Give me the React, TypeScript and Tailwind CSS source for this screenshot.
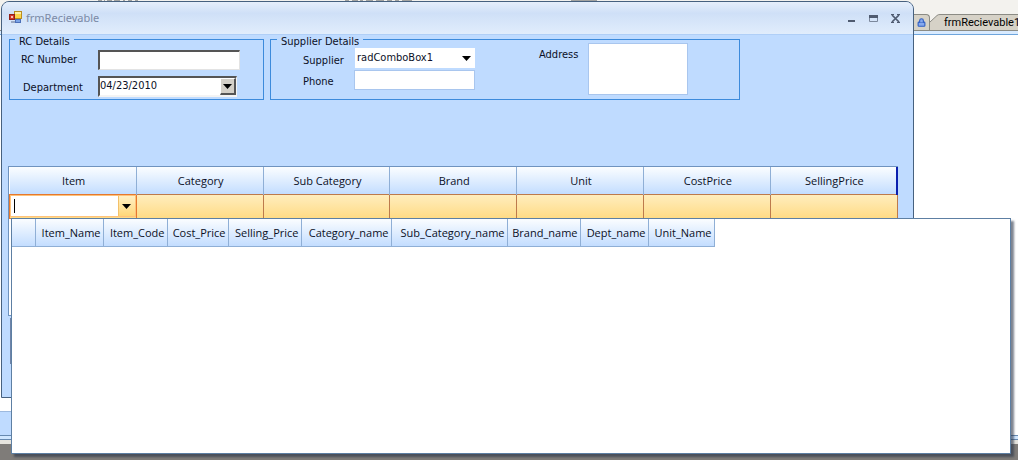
import { Lock } from "lucide-react";

const gridColumns = ["Item", "Category", "Sub Category", "Brand", "Unit", "CostPrice", "SellingPrice"];

const lookupColumns = [
  { name: "Item_Name", width: "w-[68px]" },
  { name: "Item_Code", width: "w-16" },
  { name: "Cost_Price", width: "w-[61px]" },
  { name: "Selling_Price", width: "w-[73px]" },
  { name: "Category_name", width: "w-[90px]" },
  { name: "Sub_Category_name", width: "w-[116px]" },
  { name: "Brand_name", width: "w-[73px]" },
  { name: "Dept_name", width: "w-[68px]" },
  { name: "Unit_Name", width: "w-[66px]" },
];

function DownArrow() {
  return (
    <svg width="9" height="5" viewBox="0 0 9 5" aria-hidden="true">
      <path d="M0 0h9L4.500 5z" fill="#000" />
    </svg>
  );
}

function FormIcon() {
  return (
    <svg width="14" height="14" viewBox="0 0 14 14" aria-hidden="true">
      <rect x="5.500" y="0.500" width="7" height="7" fill="#fbd64b" stroke="#b98d20" />
      <path d="M6 1h6v2H6z" fill="#fff0a6" />
      <rect x="0.500" y="3.500" width="5" height="5" fill="#d4372a" stroke="#932018" />
      <rect x="2" y="5" width="2" height="2" fill="#f6c2b8" />
      <rect x="6.500" y="8.500" width="5" height="3" fill="#7ba3e6" stroke="#4c70b9" />
      <path d="M2 10h4v2H2z" fill="#9aa9c4" />
    </svg>
  );
}

function TitleBar() {
  return (
    <header className="flex h-[33px] items-center border-b border-[#b0cff7] bg-linear-to-b from-[#e6effb] via-[#cfe0f7] via-35% to-[#e1edfc] pr-[7px] pl-[7px]">
      <FormIcon />
      <h1 className="ml-[3px] flex-1 font-['Noto_Sans',sans-serif] text-[11px] text-[#7b8aa6]">frmRecievable</h1>
      <div className="flex">
        <button type="button" aria-label="Minimize" className="flex h-5 w-[22px] items-center justify-center">
          <svg width="9" height="9" viewBox="0 0 9 9">
            <path d="M1 6h7v2H1z" fill="#4f5b70" />
          </svg>
        </button>
        <button type="button" aria-label="Maximize" className="flex h-5 w-[22px] items-center justify-center">
          <svg width="9" height="9" viewBox="0 0 9 9">
            <path d="M.5 1.500h8v6h-8z" fill="none" stroke="#7c889c" />
            <path d="M0 1h9v3H0z" fill="#4f5b70" />
          </svg>
        </button>
        <button type="button" aria-label="Close" className="flex h-5 w-[22px] items-center justify-center">
          <svg width="9" height="9" viewBox="0 0 9 9">
            <path d="M1 1l7 7M8 1L1 8" stroke="#4f5b70" strokeWidth="1.700" />
            <path d="M0 .5h3M6 .5h3M0 8.500h3M6 8.500h3" stroke="#4f5b70" />
          </svg>
        </button>
      </div>
    </header>
  );
}

function RcDetails() {
  return (
    <fieldset className="h-[67px] w-[255px] shrink-0 border border-[#3d8bdc] pl-[11px]">
      <legend className="-ml-1.5 h-[13px] px-1 leading-[17px]">RC Details</legend>
      <div className="mt-1 flex h-5 items-center">
        <label htmlFor="rc" className="w-[77px] leading-4">RC Number</label>
        <input
          id="rc"
          className="h-5 w-[142px] border-t-2 border-r border-b border-l-2 border-t-[#555] border-r-[#e3e3e3] border-b-[#e3e3e3] border-l-[#555] bg-white px-1 outline-none"
        />
      </div>
      <div className="mt-1.5 flex h-[21px] items-center">
        <label htmlFor="dept" className="w-[77px] pt-0.5 pl-0.5 leading-4">Department</label>
        <div className="flex h-[21px] w-[139px] border-t-2 border-r border-b-2 border-l-2 border-t-[#555] border-r-[#f4f4f4] border-b-[#f4f4f4] border-l-[#555] bg-white">
          <input id="dept" defaultValue="04/23/2010" className="w-0 flex-1 outline-none" />
          <button
            type="button"
            aria-label="Open calendar"
            className="flex w-4 items-center justify-center border-t border-r-2 border-b-2 border-l border-t-white border-r-[#555] border-b-[#555] border-l-white bg-[#d4d0c8]"
          >
            <DownArrow />
          </button>
        </div>
      </div>
    </fieldset>
  );
}

function SupplierDetails() {
  return (
    <fieldset className="h-[67px] w-[470px] shrink-0 border border-[#3d8bdc] pl-3">
      <legend className="-ml-1.5 h-[13px] px-1 leading-[17px]">Supplier Details</legend>
      <div className="flex items-start">
        <div className="mt-0.5 flex flex-col gap-0.5 pl-5">
          <div className="flex h-5 items-center">
            <label htmlFor="supplier" className="w-[52px] pt-1.5 leading-4">Supplier</label>
            <div className="grid h-5 w-[120px] items-center bg-white">
              <select id="supplier" className="col-start-1 row-start-1 h-5 w-full appearance-none bg-transparent pl-0.5 outline-none">
                <option>radComboBox1</option>
              </select>
              <span className="pointer-events-none col-start-1 row-start-1 flex justify-end pr-1">
                <DownArrow />
              </span>
            </div>
          </div>
          <div className="flex h-5 items-center">
            <label htmlFor="phone" className="w-[51px] pt-1 leading-4">Phone</label>
            <input id="phone" className="h-5 w-[121px] border border-[#a9c6ee] bg-white px-1 outline-none" />
          </div>
        </div>
        <label htmlFor="address" className="ml-16 w-[49px] pt-px leading-4">Address</label>
        <textarea id="address" className="-mt-[3px] h-[52px] w-[100px] resize-none border border-[#a9c6ee] bg-white px-1 outline-none" />
      </div>
    </fieldset>
  );
}

function ItemsGrid() {
  return (
    <section className="mt-[66px] h-[150px] border-y border-l border-[#6f93bf] bg-white font-['Open_Sans','Noto_Sans',sans-serif] text-[11px]">
      <table className="w-full table-fixed border-collapse">
        <thead>
          <tr className="h-[27px] bg-linear-to-b from-[#fbfdff] to-[#c3ddff]">
            {gridColumns.map((name) => (
              <th key={name} className="border-r border-[#8fafd6] p-0 pt-0.5 pl-0.5 font-normal last:border-r-2 last:border-r-[#0b1fae]">
                {name}
              </th>
            ))}
          </tr>
        </thead>
        <tbody>
          <tr className="h-6 bg-linear-to-b from-[#ffeebf] to-[#ffdb85]">
            <td className="border border-[#e5792f] p-0">
              <div className="flex h-[22px] items-stretch border border-[#ffc27a] bg-white">
                <span className="my-[3px] ml-[3px] w-px bg-black" />
                <input aria-label="Item" className="w-0 flex-1 outline-none" />
                <button
                  type="button"
                  aria-label="Show items"
                  className="flex w-[17px] items-center justify-center border-l border-[#f3c069] bg-linear-to-b from-[#fff0c4] to-[#ffd778]"
                >
                  <DownArrow />
                </button>
              </div>
            </td>
            {gridColumns.slice(1).map((name) => (
              <td key={name} className="border border-[#bd7a4c] p-0" />
            ))}
          </tr>
        </tbody>
      </table>
    </section>
  );
}

function LookupPopup() {
  return (
    <section className="absolute top-[218px] right-[7px] left-[11px] h-[236px] border border-[#5d7fa3] bg-white font-['Open_Sans','Noto_Sans',sans-serif] text-[11px] shadow-[3px_3px_2px_rgba(40,50,70,0.6)]">
      <table className="table-fixed border-collapse">
        <thead>
          <tr className="h-[27px] bg-linear-to-b from-[#fbfdff] to-[#c3ddff]">
            <th aria-label="Row" className="w-[23px] border-r border-b border-[#8fafd6] p-0" />
            {lookupColumns.map(({ name, width }) => (
              <th key={name} className={`${width} border-r border-b border-[#8fafd6] p-0 pt-0.5 pr-0.5 text-right font-normal`}>
                {name}
              </th>
            ))}
          </tr>
        </thead>
      </table>
    </section>
  );
}

function Workspace() {
  return (
    <div className="flex h-full flex-col">
      <div className="flex h-[31px] items-end justify-between border-b border-[#8b8b84] bg-[#f3f2ee]">
        <svg className="self-start" width="600" height="2" viewBox="0 0 600 2" aria-hidden="true">
          <path d="M98 .5h4m2 0h1m2 0h5m2 0h6m3 0h2m3 0h4m3 0h3M345 .5h4m3 0h6m2 0h3m3 0h7m3 0h8m3 0h5m3 0h4m3 0h10M571 .5h26" stroke="#a3a3a0" />
        </svg>
        <div className="flex h-4 w-[106px] shrink-0 items-end">
          <span className="flex h-4 w-[18px] items-center justify-end rounded-tr border-t border-r border-[#8b8b84] bg-[#d6d2c7] pr-[3px]">
            <Lock size={9} strokeWidth={3} color="#2f5fc4" fill="#86a9ee" />
          </span>
          <a href="#receivable" className="flex h-4 w-[88px] font-['Roboto',sans-serif] text-[11px] whitespace-nowrap text-black">
            <svg width="14" height="16" viewBox="0 0 14 16" className="shrink-0" aria-hidden="true">
              <path d="M0 16V8L7 1.500Q8 .5 10 .5H14V16z" fill="#d6d2c7" />
              <path d="M0 8L7 1.500Q8 .5 10 .5H14" fill="none" stroke="#8b8b84" />
            </svg>
            <span className="flex-1 border-t border-[#8b8b84] bg-[#d6d2c7] leading-[15px]">frmRecievable1</span>
          </a>
        </div>
      </div>
      <div className="h-1 shrink-0 border-b border-[#6ea5dc] bg-[#d9ebff]" />
      <div className="flex-1 bg-white" />
      <div className="h-6 w-3 shrink-0 border-t border-[#9db9de] bg-[#bfdbff]" />
      <div className="h-[5px] shrink-0 border-y border-[#6689b0] bg-[#cfe6ff]" />
      <div className="h-1 shrink-0 bg-[#e6e4de]" />
      <div className="h-4 shrink-0 bg-[#7f7c79]" />
    </div>
  );
}

export default function App() {
  return (
    <main className="relative h-screen overflow-hidden bg-white font-['DejaVu_Sans_Condensed','Noto_Sans',sans-serif] text-[11px] text-[#0b1026]">
      <Workspace />
      <section className="absolute top-px right-[104px] left-px h-[397px] overflow-hidden rounded-t-lg border border-[#47617f] bg-[#bfdbff]">
        <TitleBar />
        <div className="pr-[15px] pl-1.5">
          <div className="-mt-0.5 flex gap-1.5 pl-px">
            <RcDetails />
            <SupplierDetails />
          </div>
          <ItemsGrid />
          <div className="mt-0.5 ml-0.5 h-[46px] border border-[#6f84a8]" />
        </div>
      </section>
      <LookupPopup />
    </main>
  );
}
